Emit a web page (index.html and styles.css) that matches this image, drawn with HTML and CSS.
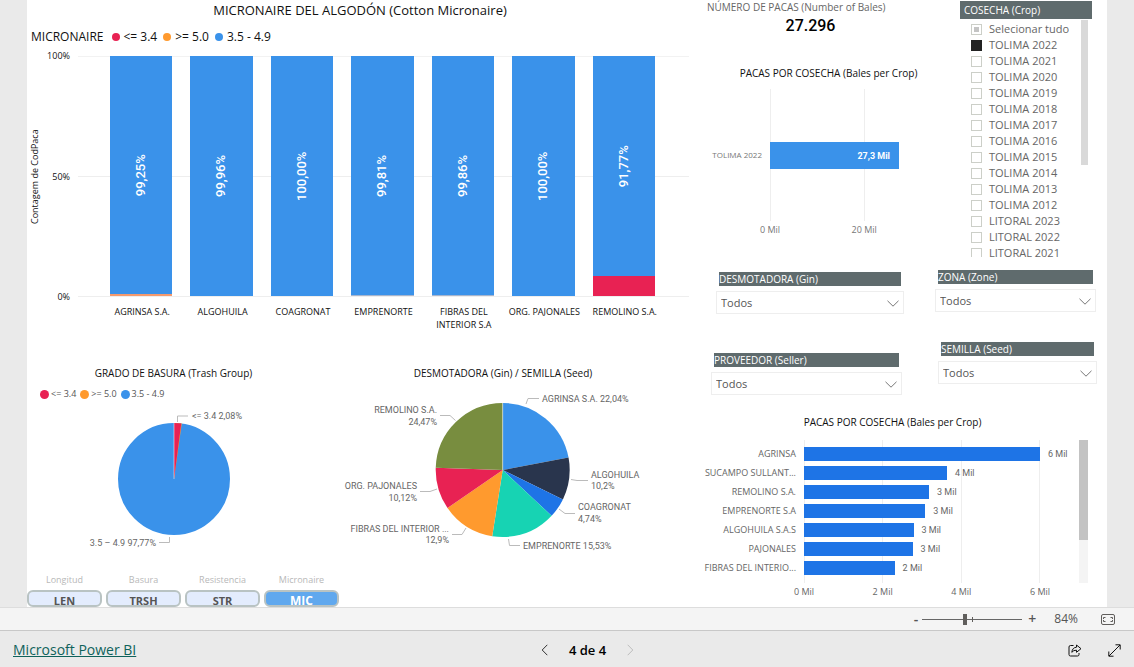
FILE: index.html
```html
<!DOCTYPE html>
<html lang="es">
<head>
<meta charset="utf-8">
<meta name="viewport" content="width=device-width, initial-scale=1">
<title>Micronaire del algodón</title>
<link rel="stylesheet" href="styles.css">
</head>
<body>
<main class="report">
  <div class="page">
    <section class="left">
      <h1 class="main-title">MICRONAIRE DEL ALGODÓN (Cotton Micronaire)</h1>
      <div class="legend legend-main">
        <span class="legend-name">MICRONAIRE</span>
        <span class="key"><i class="dot red"></i>&lt;= 3.4</span>
        <span class="key"><i class="dot orange"></i>&gt;= 5.0</span>
        <span class="key"><i class="dot blue"></i>3.5 - 4.9</span>
      </div>
      <div class="columns-chart">
        <div class="y-title">Contagem de CodPaca</div>
        <div class="y-axis"><span>100%</span><span>50%</span><span>0%</span></div>
        <div class="columns-plot">
          <div class="column"><b class="seg">99,25%</b><i class="rest peach" style="height:0.75%"></i></div>
          <div class="column"><b class="seg">99,96%</b></div>
          <div class="column"><b class="seg">100,00%</b></div>
          <div class="column"><b class="seg">99,81%</b><i class="rest pale" style="height:0.19%"></i></div>
          <div class="column"><b class="seg">99,86%</b><i class="rest pale" style="height:0.14%"></i></div>
          <div class="column"><b class="seg">100,00%</b></div>
          <div class="column"><b class="seg">91,77%</b><i class="rest red" style="height:8.23%"></i></div>
        </div>
        <div class="x-labels">
          <span>AGRINSA S.A.</span><span>ALGOHUILA</span><span>COAGRONAT</span><span>EMPRENORTE</span><span>FIBRAS DEL<br>INTERIOR S.A</span><span>ORG. PAJONALES</span><span>REMOLINO S.A.</span>
        </div>
      </div>

      <div class="pies">
        <section class="pie-panel">
          <h2 class="chart-title">GRADO DE BASURA (Trash Group)</h2>
          <div class="legend legend-small">
            <span class="key"><i class="dot red"></i>&lt;= 3.4</span>
            <span class="key"><i class="dot orange"></i>&gt;= 5.0</span>
            <span class="key"><i class="dot blue"></i>3.5 - 4.9</span>
          </div>
          <svg class="pie" width="180" height="150" viewBox="84 405 180 150" role="img" aria-label="Grado de basura">
            <g transform="rotate(-90 174 480)" fill="none" stroke-width="56">
              <circle cx="174" cy="480" r="28" stroke="#3a92ea"/>
              <circle cx="174" cy="480" r="28" pathLength="100" stroke="#ff9a2e" stroke-dasharray="2.23 97.77"/>
              <circle cx="174" cy="480" r="28" pathLength="100" stroke="#e82253" stroke-dasharray="2.08 97.92"/>
            </g>
            <path class="split" d="M174 424V480"/>
            <path class="leader" d="M177.500 423V417H188M169.500 538V543.500H159"/>
            <text class="data-label" x="192" y="420">&lt;= 3.4 2,08%</text>
            <text class="data-label" x="156" y="547" text-anchor="end">3.5 – 4.9 97,77%</text>
          </svg>
        </section>
        <section class="pie-panel">
          <h2 class="chart-title">DESMOTADORA (Gin) / SEMILLA (Seed)</h2>
          <svg class="pie" width="320" height="175" viewBox="343 386 320 175" role="img" aria-label="Desmotadora y semilla">
            <g transform="rotate(-90 502.700 471)" fill="none" stroke-width="67">
              <circle cx="502.700" cy="471" r="33.500" pathLength="100" stroke="#3a92ea" stroke-dasharray="22.040 77.960"/>
              <circle cx="502.700" cy="471" r="33.500" pathLength="100" stroke="#29354d" stroke-dasharray="10.200 89.800" stroke-dashoffset="-22.040"/>
              <circle cx="502.700" cy="471" r="33.500" pathLength="100" stroke="#1e74e6" stroke-dasharray="4.740 95.260" stroke-dashoffset="-32.240"/>
              <circle cx="502.700" cy="471" r="33.500" pathLength="100" stroke="#17d3b3" stroke-dasharray="15.530 84.470" stroke-dashoffset="-36.980"/>
              <circle cx="502.700" cy="471" r="33.500" pathLength="100" stroke="#ff9a2e" stroke-dasharray="12.900 87.100" stroke-dashoffset="-52.510"/>
              <circle cx="502.700" cy="471" r="33.500" pathLength="100" stroke="#e82253" stroke-dasharray="10.120 89.880" stroke-dashoffset="-65.410"/>
              <circle cx="502.700" cy="471" r="33.500" pathLength="100" stroke="#788d3f" stroke-dasharray="24.470 75.530" stroke-dashoffset="-75.530"/>
            </g>
            <path class="split" d="M502.700 404V471"/>
            <path class="leader" d="M526 405L528 399.500H539M571 480.500L577 481.500H588M559 510L565 514.500H575M508.500 540L509.500 546.500H520M466 529L462 535.500H452M437 490L430 492.500H420M455.500 421.500L450 416.500H440"/>
            <text class="data-label" x="542" y="403">AGRINSA S.A. 22,04%</text>
            <text class="data-label" x="591" y="479">ALGOHUILA</text>
            <text class="data-label" x="591" y="490">10,2%</text>
            <text class="data-label" x="578" y="511">COAGRONAT</text>
            <text class="data-label" x="578" y="523">4,74%</text>
            <text class="data-label" x="523" y="550">EMPRENORTE 15,53%</text>
            <text class="data-label" x="449" y="533" text-anchor="end">FIBRAS DEL INTERIOR ...</text>
            <text class="data-label" x="449" y="544" text-anchor="end">12,9%</text>
            <text class="data-label" x="417" y="490" text-anchor="end">ORG. PAJONALES</text>
            <text class="data-label" x="417" y="502" text-anchor="end">10,12%</text>
            <text class="data-label" x="437" y="414" text-anchor="end">REMOLINO S.A.</text>
            <text class="data-label" x="437" y="426" text-anchor="end">24,47%</text>
          </svg>
        </section>
      </div>

      <nav class="tabs">
        <div class="tab"><label for="t1">Longitud</label><button id="t1" type="button">LEN</button></div>
        <div class="tab"><label for="t2">Basura</label><button id="t2" type="button">TRSH</button></div>
        <div class="tab"><label for="t3">Resistencia</label><button id="t3" type="button">STR</button></div>
        <div class="tab"><label for="t4">Micronaire</label><button id="t4" type="button" class="active">MIC</button></div>
      </nav>
    </section>

    <section class="right">
      <div class="filters">
        <div class="col-a">
          <div class="card">
            <span class="card-label">NÚMERO DE PACAS (Number of Bales)</span>
            <strong class="card-value">27.296</strong>
          </div>
          <section class="crop-chart">
            <h2 class="chart-title">PACAS POR COSECHA (Bales per Crop)</h2>
            <div class="crop-body">
              <span class="cat">TOLIMA 2022</span>
              <div class="crop-plot"><div class="crop-grid"><i></i><i></i></div><b class="crop-bar">27,3 Mil</b></div>
              <div class="crop-ticks"><span>0 Mil</span><span>20 Mil</span></div>
            </div>
          </section>
          <div class="slicer gin">
            <label for="gin">DESMOTADORA (Gin)</label>
            <div class="select"><select id="gin"><option>Todos</option></select><svg viewBox="0 0 12 7" aria-hidden="true"><path d="M.5.8 6 6.200 11.500.8"/></svg></div>
          </div>
          <div class="slicer seller">
            <label for="seller">PROVEEDOR (Seller)</label>
            <div class="select"><select id="seller"><option>Todos</option></select><svg viewBox="0 0 12 7" aria-hidden="true"><path d="M.5.8 6 6.200 11.500.8"/></svg></div>
          </div>
        </div>
        <div class="col-b">
          <fieldset class="crop-list">
            <legend>COSECHA (Crop)</legend>
            <div class="list-body">
              <div class="items">
                <label><input type="checkbox" class="partial">Selecionar tudo</label>
                <label><input type="checkbox" checked>TOLIMA 2022</label>
                <label><input type="checkbox">TOLIMA 2021</label>
                <label><input type="checkbox">TOLIMA 2020</label>
                <label><input type="checkbox">TOLIMA 2019</label>
                <label><input type="checkbox">TOLIMA 2018</label>
                <label><input type="checkbox">TOLIMA 2017</label>
                <label><input type="checkbox">TOLIMA 2016</label>
                <label><input type="checkbox">TOLIMA 2015</label>
                <label><input type="checkbox">TOLIMA 2014</label>
                <label><input type="checkbox">TOLIMA 2013</label>
                <label><input type="checkbox">TOLIMA 2012</label>
                <label><input type="checkbox">LITORAL 2023</label>
                <label><input type="checkbox">LITORAL 2022</label>
                <label><input type="checkbox">LITORAL 2021</label>
              </div>
              <div class="list-thumb"></div>
            </div>
          </fieldset>
          <div class="slicer zone">
            <label for="zone">ZONA (Zone)</label>
            <div class="select"><select id="zone"><option>Todos</option></select><svg viewBox="0 0 12 7" aria-hidden="true"><path d="M.5.8 6 6.200 11.500.8"/></svg></div>
          </div>
          <div class="slicer seed">
            <label for="seed">SEMILLA (Seed)</label>
            <div class="select"><select id="seed"><option>Todos</option></select><svg viewBox="0 0 12 7" aria-hidden="true"><path d="M.5.8 6 6.200 11.500.8"/></svg></div>
          </div>
        </div>
      </div>

      <section class="seller-chart">
        <h2 class="chart-title">PACAS POR COSECHA (Bales per Crop)</h2>
        <div class="seller-body">
          <div class="cats"><span>AGRINSA</span><span>SUCAMPO SULLANT...</span><span>REMOLINO S.A.</span><span>EMPRENORTE S.A</span><span>ALGOHUILA S.A.S</span><span>PAJONALES</span><span>FIBRAS DEL INTERIO...</span></div>
          <div class="bars">
            <div class="bars-grid"><i></i><i></i><i></i></div>
            <div class="bar-row"><i style="width:100%"></i><span>6 Mil</span></div>
            <div class="bar-row"><i style="width:60.6%"></i><span>4 Mil</span></div>
            <div class="bar-row"><i style="width:53%"></i><span>3 Mil</span></div>
            <div class="bar-row"><i style="width:51.4%"></i><span>3 Mil</span></div>
            <div class="bar-row"><i style="width:46.4%"></i><span>3 Mil</span></div>
            <div class="bar-row"><i style="width:46%"></i><span>3 Mil</span></div>
            <div class="bar-row"><i style="width:38.4%"></i><span>2 Mil</span></div>
          </div>
          <div class="scroll"><div class="scroll-thumb"></div></div>
          <div class="bar-ticks"><span>0 Mil</span><span>2 Mil</span><span>4 Mil</span><span>6 Mil</span></div>
        </div>
      </section>
    </section>
  </div>
</main>

<div class="zoom-bar">
  <button type="button" class="step" aria-label="Alejar">-</button>
  <div class="range"><input type="range" min="0" max="100" value="42" aria-label="Zoom"><i class="mark"></i></div>
  <button type="button" class="step" aria-label="Acercar">+</button>
  <span class="percent">84%</span>
  <button type="button" class="fit" aria-label="Ajustar a la página">
    <svg width="14" height="11" viewBox="0 0 14 11" fill="none" stroke="#605e5c"><rect x=".5" y=".5" width="13" height="10" rx="1.500"/><path d="M4.500 3.500H2.500V5M9.500 3.500H11.500V5M4.500 7.500H2.500V6M9.500 7.500H11.500V6"/></svg>
  </button>
</div>
<footer class="nav-bar">
  <a href="#">Microsoft Power BI</a>
  <div class="pager">
    <button type="button" aria-label="Anterior"><svg width="7" height="12" viewBox="0 0 7 12" fill="none" stroke="#333"><path d="M6.300.8 1.200 6 6.300 11.200"/></svg></button>
    <span>4 de 4</span>
    <button type="button" aria-label="Siguiente" disabled><svg width="7" height="12" viewBox="0 0 7 12" fill="none" stroke="#bdbdbd"><path d="M.7.8 5.800 6 .7 11.200"/></svg></button>
  </div>
  <div class="actions">
    <button type="button" aria-label="Compartir"><svg width="14" height="13" viewBox="0 0 14 13" fill="none" stroke="#111"><path d="M5.500 1.500H2.500Q1 1.500 1 3V10.500Q1 12 2.500 12H9.500Q11 12 11 10.500V9"/><path d="M8.500 1 13 4.700 8.500 8.300V6.200Q5.500 6 3.800 8.300 4.300 3.600 8.500 3.200Z" stroke-linejoin="round"/></svg></button>
    <button type="button" aria-label="Pantalla completa"><svg width="13" height="13" viewBox="0 0 13 13" fill="none" stroke="#111"><path d="M1 12 12 1M7.500.8H12.200V5.500M.8 7.500V12.200H5.500"/></svg></button>
  </div>
</footer>
</body>
</html>
```
FILE: styles.css
```css
* { box-sizing: border-box; }
body {
  margin: 0;
  height: 100vh;
  display: flex;
  flex-direction: column;
  overflow: hidden;
  background: #eaeaea;
  color: #111;
  font: 10px/12px "Open Sans", "Noto Sans", sans-serif;
}
h1, h2 { margin: 0; font-weight: 400; }
button { margin: 0; padding: 0; border: 0; background: none; font: inherit; color: inherit; }
svg { display: block; flex: none; }

.report { flex: 1; min-height: 0; overflow: hidden; padding: 0 27px; }
.page { display: grid; grid-template-columns: 673fr 407fr; height: 100%; background: #fff; }
.left, .right { min-width: 0; display: flex; flex-direction: column; }

.main-title { padding: 1px 7px 0 0; text-align: center; font-size: 13px; line-height: 18px; }
.chart-title { text-align: center; font-size: 10px; line-height: 14px; color: #111; white-space: nowrap; }

.legend { display: flex; align-items: center; }
.legend-main { gap: 6px; margin-top: 9px; padding-left: 4px; font-size: 12px; line-height: 17px; }
.legend-small { gap: 4px; margin-top: 7px; padding-left: 13px; font-size: 9px; line-height: 14px; color: #555; }
.key { display: flex; align-items: center; gap: 4px; }
.legend-small .key { gap: 2px; }
.legend-name { margin-right: 2px; font-weight: 500; }
.dot { width: 8px; height: 8px; border-radius: 50%; }
.legend-small .dot { width: 9px; height: 9px; }
.red { background: #e82253; }
.orange { background: #ff9a2e; }
.blue { background: #3a92ea; }

.columns-chart {
  display: grid;
  grid-template-columns: 16px 27px 1fr;
  grid-template-rows: 241px 38px;
  margin: 11px 11px 0 0;
}
.y-title { writing-mode: vertical-rl; transform: rotate(180deg); text-align: center; line-height: 16px; font-size: 9px; }
.y-axis { display: flex; flex-direction: column; justify-content: space-between; font-size: 9px; }
.y-axis span { height: 0; display: flex; align-items: center; justify-content: flex-end; }
.columns-plot {
  display: grid;
  grid-template-columns: repeat(7, 1fr);
  margin-left: 8px;
  padding: 0 25px 0 23px;
  border-bottom: 1px solid #eee;
  background: linear-gradient(#eee, #eee) 0 50% / 100% 1px no-repeat, linear-gradient(#f2f2f2, #f2f2f2) 0 0 / 100% 1px no-repeat;
}
.column { display: flex; flex-direction: column; margin: 0 9px; background: #3a92ea; }
.seg {
  flex: 1;
  display: flex;
  align-items: center;
  justify-content: center;
  writing-mode: vertical-rl;
  transform: rotate(180deg);
  color: #fff;
  font: 500 13px/16px Roboto, sans-serif;
}
.rest { flex: none; min-height: 1px; }
.peach { background: #f59a6e; }
.pale { background: #a5b5cf; }
.x-labels {
  grid-column: 3;
  display: grid;
  grid-template-columns: repeat(7, 1fr);
  margin-left: 8px;
  padding: 8px 24px 0;
  font-size: 9px;
  line-height: 13px;
  text-align: center;
  white-space: nowrap;
}

.pies { display: grid; grid-template-columns: 293fr 366fr; margin: 31px 14px 0 0; }
.pie-panel { display: flex; flex-direction: column; }
.pie { align-self: center; }
.legend-small + .pie { margin-top: 3px; }
.chart-title + .pie { margin-top: 5px; }
.data-label { font: 9px Roboto, sans-serif; fill: #666; }
.leader { fill: none; stroke: #bbb; }
.split { stroke: #fff; stroke-opacity: .5; }

.tabs { display: flex; gap: 4px; margin-top: auto; }
.tab { width: 75px; display: flex; flex-direction: column; text-align: center; color: #b8b8b8; font-size: 9px; }
.tab label { margin-bottom: 4px; }
.tab button {
  height: 17px;
  padding-top: 3px;
  border: 2px solid #b9c3c3;
  border-radius: 6px;
  background: #e3ecfd;
  color: #555;
  font-size: 11px;
  font-weight: 700;
  line-height: 12px;
}
.tab .active { background: #60a8ee; color: #fff; font-size: 12px; }

.filters { display: grid; grid-template-columns: 235fr 172fr; height: 414px; }
.col-a, .col-b { min-width: 0; display: flex; flex-direction: column; }
.card { display: flex; flex-direction: column; padding-left: 7px; }
.card-label { line-height: 15px; color: #666; white-space: nowrap; }
.card-value { padding-right: 21px; text-align: center; font: 500 16px/21px Roboto, sans-serif; color: #000; }
.crop-chart { margin-top: 30px; }
.crop-chart .chart-title { padding-left: 22px; }
.crop-body {
  display: grid;
  grid-template-columns: 62px 1fr;
  grid-template-rows: 132px 18px;
  column-gap: 8px;
  margin: 9px 36px 0 0;
  color: #777;
  font-size: 9px;
}
.cat { align-self: center; text-align: right; white-space: nowrap; font-size: 8px; }
.crop-plot { position: relative; display: flex; align-items: center; }
.crop-grid { position: absolute; inset: 0; display: grid; grid-template-columns: 73fr 27fr; }
.crop-grid i { border-left: 1px solid #eee; }
.crop-bar {
  position: relative;
  flex: 1;
  height: 27px;
  padding-right: 9px;
  background: #3a92ea;
  color: #fff;
  text-align: right;
  font: 700 9px/28px Roboto, sans-serif;
}
.crop-ticks { grid-column: 2; display: grid; grid-template-columns: 73fr 27fr; }
.crop-ticks span, .bar-ticks span { width: 0; display: flex; justify-content: center; align-items: center; white-space: nowrap; }

.slicer { display: flex; flex-direction: column; gap: 5px; }
.slicer label { margin: 0 3px; background: #5f6b6d; color: #fff; line-height: 14px; height: 14px; }
.select { position: relative; height: 23px; border: 1px solid #eee; }
.select select {
  appearance: none;
  width: 100%;
  height: 100%;
  padding: 0 4px;
  border: 0;
  border-radius: 0;
  background: transparent;
  color: #555;
  font: 11px/16px "Open Sans", "Noto Sans", sans-serif;
}
.select svg { position: absolute; right: 4px; top: 8px; width: 12px; height: 7px; fill: none; stroke: #777; pointer-events: none; }
.gin { margin: 33px 31px 0 16px; }
.seller { margin: 39px 33px 0 11px; }
.zone { margin: 13px 11px 0 0; }
.seed { margin: 30px 10px 0 3px; }

.crop-list { min-width: 0; margin: 1px 15px 0 25px; padding: 0; border: 0; }
.crop-list legend { width: 100%; padding: 0 4px; background: #5f6b6d; color: #fff; line-height: 18px; }
.list-body { display: flex; justify-content: space-between; height: 238px; padding: 1px 4px 0 11px; overflow: hidden; }
.items { display: flex; flex-direction: column; padding-top: 1px; overflow: hidden; }
.items label { flex: none; display: flex; align-items: center; gap: 7px; height: 16px; color: #666; font-size: 11px; white-space: nowrap; }
.items input { appearance: none; width: 11px; height: 11px; margin: 0; border: 1px solid #cccfc8; background: #fff; }
.items input:checked { border-color: #222; background: #222; }
.items .partial { background: #c4c4c4; border-color: #cccfc8; box-shadow: inset 0 0 0 2px #fff; }
.list-thumb { width: 7px; height: 145px; background: #d9d9d9; }

.seller-chart .chart-title { padding: 0 22px 0 0; line-height: 16px; }
.seller-body {
  display: grid;
  grid-template-columns: 96px 1fr 9px;
  grid-template-rows: 143px 18px;
  margin: 10px 19px 0 0;
  color: #666;
  font-size: 9px;
}
.cats { display: flex; flex-direction: column; padding-top: 4px; text-align: right; white-space: nowrap; }
.cats span { height: 19px; line-height: 19px; }
.bars { position: relative; padding-top: 4px; margin: 0 39px 0 8px; }
.bars-grid { position: absolute; inset: 0; display: grid; grid-template-columns: repeat(3, 1fr); border-right: 1px solid #eee; }
.bars-grid i { border-left: 1px solid #eee; }
.bar-row { position: relative; display: flex; align-items: center; gap: 8px; height: 19px; white-space: nowrap; }
.bar-row i { flex: none; height: 14px; background: #1e74e6; }
.bar-row span { font-family: Roboto, sans-serif; }
.scroll { background: #f4f4f4; }
.scroll-thumb { height: 70%; background: #c3c3c3; }
.bar-ticks { grid-column: 2; display: grid; grid-template-columns: repeat(3, 1fr) 0; margin: 0 39px 0 8px; }

.zoom-bar {
  display: flex;
  align-items: center;
  justify-content: flex-end;
  height: 23px;
  padding-right: 19px;
  border-top: 1px solid #ddd;
  background: #f4f4f4;
  color: #555;
}
.step { font-size: 14px; font-weight: 600; }
.range { position: relative; display: flex; width: 100px; margin: 0 6px 0 4px; }
.range input { appearance: none; width: 100%; height: 11px; margin: 0; background: linear-gradient(#666, #666) 0 50% / 100% 1px no-repeat; }
.range input::-webkit-slider-thumb { appearance: none; width: 4px; height: 11px; background: #605e5c; }
.mark { position: absolute; left: 50%; top: 3px; width: 1px; height: 5px; background: #605e5c; }
.percent { margin: 0 23px 0 18px; font-size: 12px; }

.nav-bar {
  display: grid;
  grid-template-columns: 1fr auto 1fr;
  align-items: center;
  height: 37px;
  padding: 2px 13px 0;
  border-top: 1px solid #c8c8c8;
  background: #eaeaea;
}
.nav-bar a { color: #0f625b; font-size: 14px; line-height: 20px; }
.pager { display: flex; align-items: center; gap: 21px; padding-left: 41px; font-size: 13px; font-weight: 600; color: #000; }
.actions { display: flex; justify-content: flex-end; gap: 26px; }
```
